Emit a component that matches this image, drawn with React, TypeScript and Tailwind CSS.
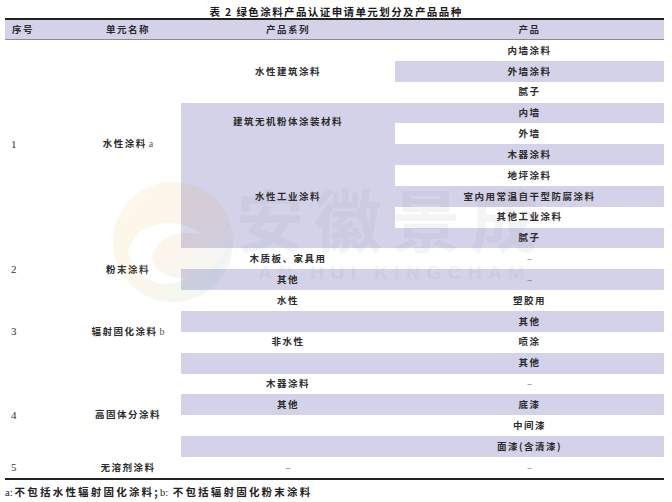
import React from "react";

const CJK = { fontFamily: '"Noto Sans CJK SC", "Noto Sans", sans-serif' };

function C({ className = "", children }: { className?: string; children?: React.ReactNode }) {
  return (
    <div className={"flex items-center justify-center text-[9.5px] font-bold tracking-[1.5px] text-[#2b2b2b] leading-none " + className}>
      {children}
    </div>
  );
}

const Dash = () => <span className="font-normal text-[#777] tracking-normal">–</span>;
const Num = ({ n }: { n: string }) => (
  <span className="font-['Liberation_Serif',serif] font-normal text-[11px] text-[#333] tracking-normal">{n}</span>
);
const Sup = ({ t }: { t: string }) => (
  <span className="font-['Liberation_Serif',serif] font-normal text-[10px] text-[#555] tracking-normal ml-[2px]">{t}</span>
);

export default function App() {
  const sh = "bg-[#d3d2e8]";
  return (
    <div className="relative w-[672px] h-[502px] bg-white overflow-hidden" style={CJK}>
      <div className="h-[18px] pt-[6px] flex justify-center text-[10.5px] leading-[12px] font-bold tracking-[1.4px] text-[#1a1a1a]">
        表 2 绿色涂料产品认证申请单元划分及产品品种
      </div>
      <div className="ml-[5px] w-[659px] border-t-2 border-[#222]">
        <div className="grid grid-cols-[70px_106px_214px_269px] h-[20px] bg-[#d3d2e8] border-b border-[#8c8c8c]">
          <C className="justify-start pl-[7px]">序号</C>
          <C>单元名称</C>
          <C>产品系列</C>
          <C>产品</C>
        </div>
        <div className="grid grid-cols-[70px_106px_214px_269px] grid-rows-[repeat(21,20.85px)] border-b-2 border-[#222]">
          <C className="col-start-1 row-start-1 row-span-10 justify-start pl-[6px]"><Num n="1" /></C>
          <C className="col-start-1 row-start-11 row-span-2 justify-start pl-[6px]"><Num n="2" /></C>
          <C className="col-start-1 row-start-13 row-span-4 justify-start pl-[6px]"><Num n="3" /></C>
          <C className="col-start-1 row-start-17 row-span-4 justify-start pl-[6px]"><Num n="4" /></C>
          <C className="col-start-1 row-start-21 justify-start pl-[6px]"><Num n="5" /></C>

          <C className="col-start-2 row-start-1 row-span-10">水性涂料<Sup t="a" /></C>
          <C className="col-start-2 row-start-11 row-span-2">粉末涂料</C>
          <C className="col-start-2 row-start-13 row-span-4">辐射固化涂料<Sup t="b" /></C>
          <C className="col-start-2 row-start-17 row-span-4">高固体分涂料</C>
          <C className="col-start-2 row-start-21">无溶剂涂料</C>

          <C className="col-start-3 row-start-1 row-span-3">水性建筑涂料</C>
          <C className={"col-start-3 row-start-4 row-span-2 pb-[3px] " + sh}>建筑无机粉体涂装材料</C>
          <C className={"col-start-3 row-start-6 row-span-5 " + sh}>水性工业涂料</C>
          <C className="col-start-3 row-start-11">木质板、家具用</C>
          <C className={"col-start-3 row-start-12 " + sh}>其他</C>
          <C className="col-start-3 row-start-13">水性</C>
          <C className={"col-start-3 row-start-14 " + sh}></C>
          <C className="col-start-3 row-start-15">非水性</C>
          <C className={"col-start-3 row-start-16 " + sh}></C>
          <C className="col-start-3 row-start-17">木器涂料</C>
          <C className={"col-start-3 row-start-18 " + sh}>其他</C>
          <C className="col-start-3 row-start-19"></C>
          <C className={"col-start-3 row-start-20 " + sh}></C>
          <C className="col-start-3 row-start-21"><Dash /></C>

          <C className="col-start-4 row-start-1">内墙涂料</C>
          <C className={"col-start-4 row-start-2 " + sh}>外墙涂料</C>
          <C className="col-start-4 row-start-3">腻子</C>
          <C className={"col-start-4 row-start-4 " + sh}>内墙</C>
          <C className="col-start-4 row-start-5">外墙</C>
          <C className={"col-start-4 row-start-6 " + sh}>木器涂料</C>
          <C className="col-start-4 row-start-7">地坪涂料</C>
          <C className={"col-start-4 row-start-8 " + sh}>室内用常温自干型防腐涂料</C>
          <C className="col-start-4 row-start-9">其他工业涂料</C>
          <C className={"col-start-4 row-start-10 " + sh}>腻子</C>
          <C className="col-start-4 row-start-11"><Dash /></C>
          <C className={"col-start-4 row-start-12 " + sh}><Dash /></C>
          <C className="col-start-4 row-start-13">塑胶用</C>
          <C className={"col-start-4 row-start-14 " + sh}>其他</C>
          <C className="col-start-4 row-start-15">喷涂</C>
          <C className={"col-start-4 row-start-16 " + sh}>其他</C>
          <C className="col-start-4 row-start-17"><Dash /></C>
          <C className={"col-start-4 row-start-18 " + sh}>底漆</C>
          <C className="col-start-4 row-start-19">中间漆</C>
          <C className={"col-start-4 row-start-20 " + sh}>面漆(含清漆)</C>
          <C className="col-start-4 row-start-21"><Dash /></C>
        </div>
      </div>
      <div className="mt-[6px] ml-[5px] text-[10.5px] leading-[12px] font-bold tracking-[2.2px] text-[#222]">
        <span className="font-['Liberation_Serif',serif] font-normal tracking-normal mr-[2px]">a:</span>不包括水性辐射固化涂料;
        <span className="font-['Liberation_Serif',serif] font-normal tracking-normal mr-[2px]">b: </span>不包括辐射固化粉末涂料
      </div>

      {/* watermark */}
      <div className="pointer-events-none absolute left-[108px] top-[180px] opacity-[0.09]">
        <svg width="130" height="124" viewBox="0 0 130 124">
          <defs>
            <linearGradient id="g1" x1="0" y1="0" x2="1" y2="1">
              <stop offset="0" stopColor="#f5c518" />
              <stop offset="0.5" stopColor="#e89a2c" />
              <stop offset="1" stopColor="#5aa8d8" />
            </linearGradient>
            <linearGradient id="g2" x1="0" y1="1" x2="1" y2="0">
              <stop offset="0" stopColor="#8cc63f" />
              <stop offset="1" stopColor="#2e8bc9" />
            </linearGradient>
          </defs>
          <circle cx="65" cy="62" r="60" fill="url(#g1)" />
          <path d="M20 70 C 30 40, 70 35, 95 55 C 80 50, 55 52, 45 72 C 40 85, 55 100, 80 98 C 55 112, 25 100, 20 70 Z" fill="#ffffff" />
          <path d="M60 118 C 90 118, 120 95, 122 62 C 110 90, 85 104, 60 104 Z" fill="url(#g2)" />
        </svg>
      </div>
      <div className="pointer-events-none absolute left-[236px] top-[182px] text-[68px] leading-[72px] font-bold tracking-[10px] text-[#7d7d95] opacity-[0.08] whitespace-nowrap">
        安徽景成
      </div>
      <div className="pointer-events-none absolute left-[258px] top-[262px] text-[19px] leading-[22px] font-bold tracking-[6.5px] text-[#7d7d95] opacity-[0.08] whitespace-nowrap font-['Liberation_Sans',sans-serif]">
        AN HUI KINGCHAM
      </div>
    </div>
  );
}
